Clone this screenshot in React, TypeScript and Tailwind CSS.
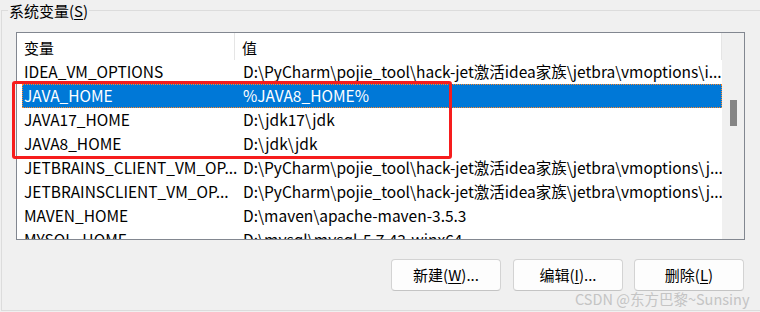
import React from "react";

type Row = { name: string; value: string; selected?: boolean };

const rows: Row[] = [
  { name: "IDEA_VM_OPTIONS", value: "D:\\PyCharm\\pojie_tool\\hack-jet激活idea家族\\jetbra\\vmoptions\\i..." },
  { name: "JAVA_HOME", value: "%JAVA8_HOME%", selected: true },
  { name: "JAVA17_HOME", value: "D:\\jdk17\\jdk" },
  { name: "JAVA8_HOME", value: "D:\\jdk\\jdk" },
  { name: "JETBRAINS_CLIENT_VM_OP...", value: "D:\\PyCharm\\pojie_tool\\hack-jet激活idea家族\\jetbra\\vmoptions\\j..." },
  { name: "JETBRAINSCLIENT_VM_OP...", value: "D:\\PyCharm\\pojie_tool\\hack-jet激活idea家族\\jetbra\\vmoptions\\j..." },
  { name: "MAVEN_HOME", value: "D:\\maven\\apache-maven-3.5.3" },
  { name: "MYSQL_HOME", value: "D:\\mysql\\mysql-5.7.43-winx64" },
];

function ListRow({ row }: { row: Row }) {
  if (row.selected) {
    return (
      <div className="h-[24px] shrink-0 flex items-center ml-[5px] bg-[#0078d7] text-white border border-dotted border-[#ff8728] whitespace-nowrap">
        <div className="w-[212px] pl-[1px] shrink-0">{row.name}</div>
        <div className="pl-[8px]">{row.value}</div>
      </div>
    );
  }
  return (
    <div className="h-[24px] shrink-0 flex items-center whitespace-nowrap">
      <div className="w-[218px] pl-[7px] shrink-0">{row.name}</div>
      <div className="pl-[8px]">{row.value}</div>
    </div>
  );
}

function Btn({ children, className }: { children: React.ReactNode; className?: string }) {
  return (
    <div
      className={
        "w-[110px] h-[32px] flex items-center justify-center bg-[#fdfdfd] border border-[#d3d3d3] border-b-[#c4c4c4] rounded-[4px] text-black text-[15px] " +
        (className ?? "")
      }
    >
      {children}
    </div>
  );
}

export default function App() {
  return (
    <div className="w-[760px] h-[312px] bg-[#f0f0f0] overflow-hidden relative font-['Noto_Sans_CJK_SC',sans-serif] text-[15px] text-black">
      <div className="pt-[10px] pl-[1px]">
        <div className="relative border border-r-0 border-[#dcdcdc] h-[301px] pl-[14px] pt-[21px]">
          <span className="absolute left-[6px] -top-[10px] bg-[#f0f0f0] px-[1px] leading-[20px]">
            系统变量(<span className="underline underline-offset-2">S</span>)
          </span>

          <div className="w-[729px] h-[208px] border border-[#828790] bg-white flex">
            <div className="w-[705px] flex flex-col overflow-hidden text-[15.5px]">
              <div className="h-[27px] shrink-0 flex text-[15px]">
                <div className="w-[218px] h-full pl-[7px] pt-[3px] flex items-center border-r border-[#e5e5e5] shrink-0">
                  变量
                </div>
                <div className="flex-1 h-full pl-[7px] pt-[3px] flex items-center border-r border-[#e5e5e5]">值</div>
              </div>
              {rows.map((r) => (
                <ListRow key={r.name} row={r} />
              ))}
            </div>
            <div className="w-[22px] bg-[#f0f0f0] flex flex-col">
              <div className="mt-[67px] ml-[8px] w-[7px] h-[26px] bg-[#858585]" />
            </div>
          </div>

          <div className="w-[728px] flex justify-end pt-[19px]">
            <Btn>
              新建(<span className="underline underline-offset-2">W</span>)...
            </Btn>
            <Btn className="ml-[12px]">
              编辑(<span className="underline underline-offset-2">I</span>)...
            </Btn>
            <Btn className="ml-[11px]">
              删除(<span className="underline underline-offset-2">L</span>)
            </Btn>
          </div>
        </div>
      </div>

      <div className="absolute left-[575px] top-[290px] text-[14.5px] leading-[18px] text-[#c4c4c4] whitespace-nowrap">
        CSDN @东方巴黎~Sunsiny
      </div>

      <div className="absolute left-[12px] top-[81px] w-[440px] h-[78px] border-[3px] border-[#f61d1d] rounded-[3px]" />
    </div>
  );
}
